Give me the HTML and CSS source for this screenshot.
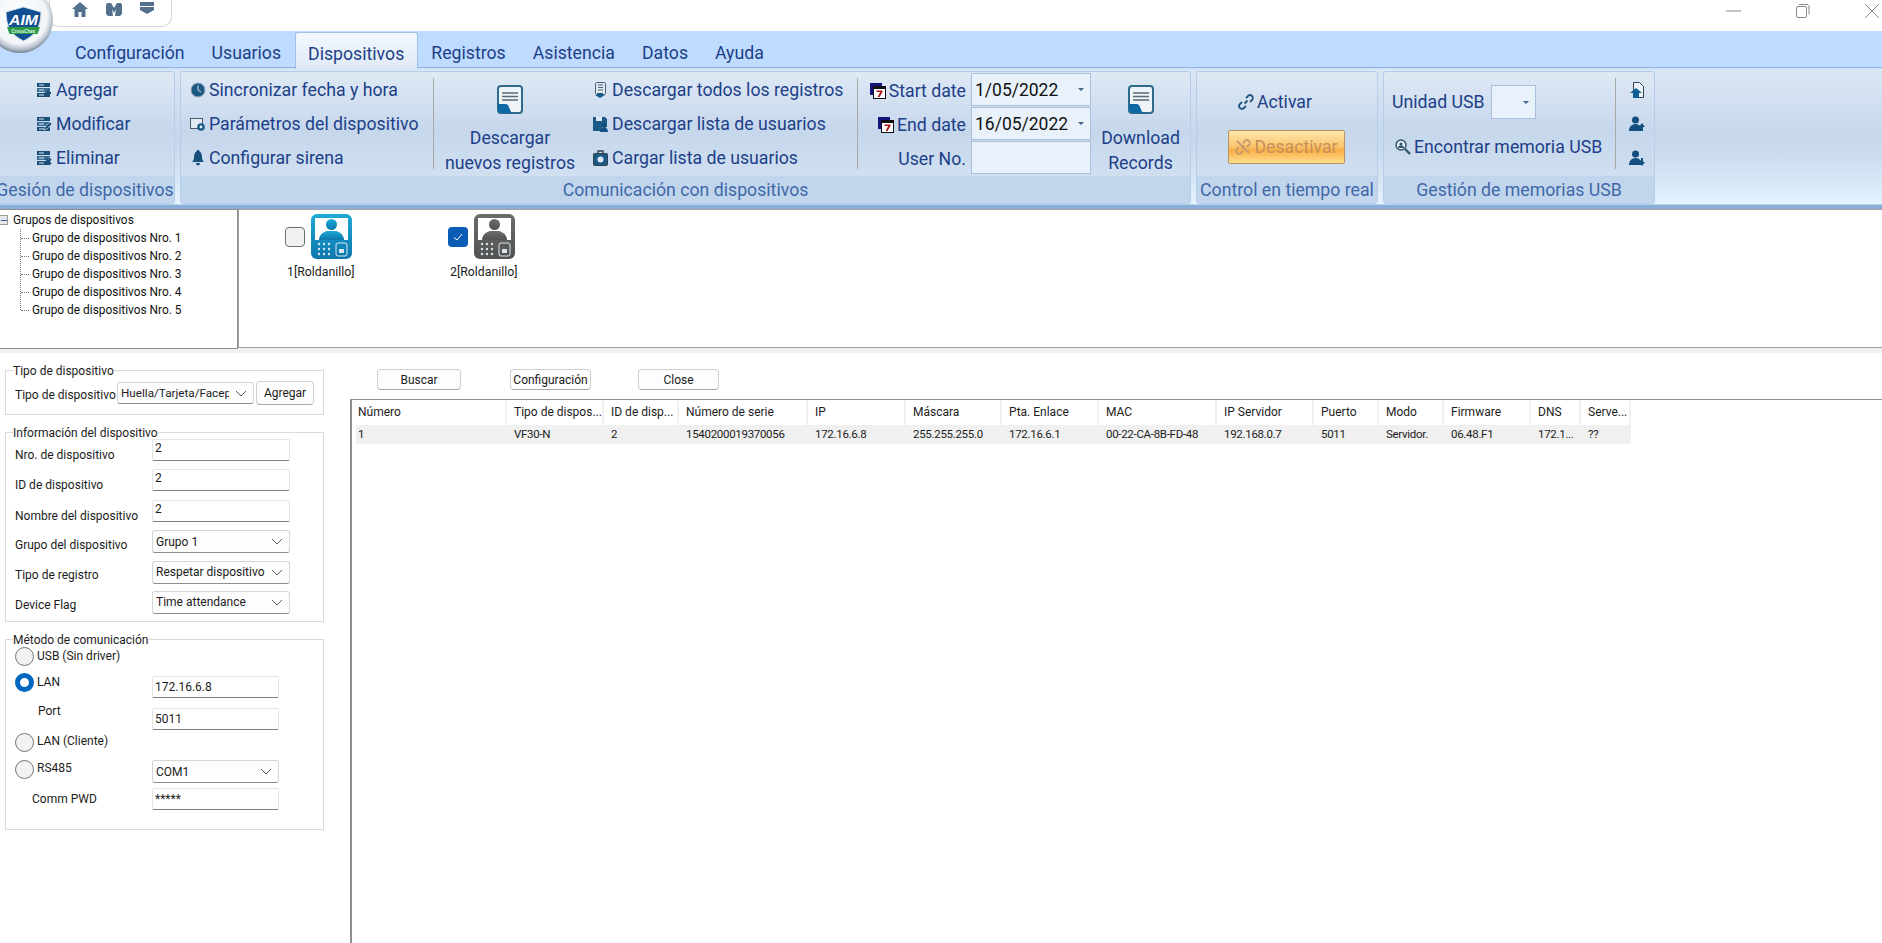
FILE: index.html
```html
<!DOCTYPE html>
<html lang="es">
<head>
    <meta charset="UTF-8">
    <title>CrossChex - Dispositivos</title>
    <link rel="stylesheet" href="styles.css">
</head>
<body>
    <svg class="sprites" width="0" height="0">
        <defs>
            <linearGradient id="blueBody" x1="0" y1="0" x2="0" y2="1">
                <stop offset="0" stop-color="#1eaad6"/>
                <stop offset="1" stop-color="#0c76ad"/>
            </linearGradient>
            <linearGradient id="grayBody" x1="0" y1="0" x2="0" y2="1">
                <stop offset="0" stop-color="#6c6c6c"/>
                <stop offset="1" stop-color="#525252"/>
            </linearGradient>
            <radialGradient id="silver" cx="0.5" cy="0.45" r="0.55">
                <stop offset="0" stop-color="#ffffff"/>
                <stop offset="0.75" stop-color="#f2f5f8"/>
                <stop offset="0.9" stop-color="#b5c0cb"/>
                <stop offset="1" stop-color="#75838f"/>
            </radialGradient>
            <symbol id="i-list" viewBox="0 0 16 16">
                <rect x="0" y="1" width="13" height="4" fill="#1c4f78"/>
                <rect x="0" y="6" width="13" height="4" fill="#3a6d92"/>
                <rect x="0" y="11" width="13" height="4" fill="#1c4f78"/>
                <path d="M2 3h5M2 8h5M2 13h5" stroke="#d9e6f2" stroke-width="1"/>
            </symbol>
            <symbol id="i-doc" viewBox="0 0 26 29">
                <rect x="1" y="1" width="24" height="27" rx="3" fill="#eef3f8" stroke="#2d6a8c" stroke-width="2"/>
                <path d="M5 8h16M5 11.5h16M5 15h16" stroke="#5a6a78" stroke-width="1.4"/>
                <path d="M1 19h8c1 0 2 1 2.5 2l3 7H5c-2 0-4-2-4-4z" fill="#0d68a4"/>
            </symbol>
            <symbol id="i-cal" viewBox="0 0 16 16">
                <rect x="0" y="0" width="12" height="12" fill="#13137a"/>
                <rect x="3" y="3" width="13" height="13" fill="#111"/>
                <rect x="4" y="6" width="11" height="9" fill="#fff"/>
                <path d="M6.5 7.5h6v1.5l-3 5H7.600l2.600-5H6.500z" fill="#b01818"/>
            </symbol>
            <symbol id="i-person" viewBox="0 0 16 16">
                <circle cx="6.500" cy="4" r="3.500" fill="#124f80"/>
                <path d="M0 15c0-4 2.500-7 6.500-7s6.500 3 6.500 7z" fill="#124f80"/>
            </symbol>
            <symbol id="i-device" viewBox="0 0 41 45">
                <rect x="0" y="0" width="41" height="45" rx="6"/>
                <rect x="4" y="4" width="33" height="22" fill="#fff"/>
                <circle cx="20.500" cy="10.500" r="5.500"/>
                <path d="M8 26c0-5 4-8 8-9h9c4 1 8 4 8 9z"/>
                <g fill="#d8e8f0">
                    <circle cx="8" cy="30" r="1.200"/><circle cx="13" cy="30" r="1.200"/><circle cx="18" cy="30" r="1.200"/>
                    <circle cx="8" cy="35" r="1.200"/><circle cx="13" cy="35" r="1.200"/><circle cx="18" cy="35" r="1.200"/>
                    <circle cx="8" cy="40" r="1.200"/><circle cx="13" cy="40" r="1.200"/><circle cx="18" cy="40" r="1.200"/>
                </g>
                <rect x="25" y="29" width="11" height="13" rx="2" fill="none" stroke="#d8e8f0" stroke-width="1"/>
                <rect x="28" y="35" width="5" height="4" fill="#d8e8f0"/>
            </symbol>
            <symbol id="i-chev" viewBox="0 0 12 7">
                <path d="M1 1l5 5 5-5" fill="none" stroke="#5c5c5c" stroke-width="1"/>
            </symbol>
        </defs>
    </svg>

    <div class="logo">
        <svg width="70" height="70" viewBox="0 0 70 70">
            <circle cx="32" cy="32" r="33" fill="url(#silver)"/>
            <path d="M18 24l17.500-5L53 24c0 14-5 23-17.500 29C23 47 18 38 18 24z" fill="#114f92" stroke="#cfe0ee" stroke-width="1"/>
            <path d="M19 39h33l-2.500 7h-28z" fill="#2a9a45"/>
            <text x="35.500" y="37" class="logo-mark" textLength="29" lengthAdjust="spacingAndGlyphs">AIM</text>
            <text x="35.500" y="44.500" class="logo-sub">CrossChex</text>
        </svg>
    </div>

    <div class="titlebar">
        <div class="quick">
            <svg width="16" height="15" viewBox="0 0 16 15"><path d="M8 0L0 7h2.500v8h4v-5h3v5h4V7H16z" fill="#53708c"/></svg>
            <svg width="16" height="14" viewBox="0 0 16 14"><path d="M1 1h4l3 5 3-5h4l1 2v9l-2 2H9l1-7-2 4-2-4 1 7H2l-2-2V3z" fill="#53708c"/></svg>
            <svg width="14" height="12" viewBox="0 0 14 12"><path d="M0 0h14v4H0zM0 5h14v3l-7 4-7-4z" fill="#53708c"/></svg>
        </div>
        <div class="win-btns">
            <svg width="16" height="16" viewBox="0 0 16 16"><path d="M0 8h15" stroke="#8a8a8a"/></svg>
            <svg width="16" height="16" viewBox="0 0 16 16"><rect x="1.500" y="3.500" width="10" height="11" rx="1.500" fill="none" stroke="#8a8a8a"/><path d="M4 1.500h8c1 0 2 1 2 2v8" fill="none" stroke="#8a8a8a"/></svg>
            <svg width="16" height="16" viewBox="0 0 16 16"><path d="M1 1l14 14M15 1L1 15" stroke="#8a8a8a"/></svg>
        </div>
    </div>

    <div class="ribbon">
        <div class="tabs">
            <div class="tab">Configuración</div>
            <div class="tab">Usuarios</div>
            <div class="tab active">Dispositivos</div>
            <div class="tab">Registros</div>
            <div class="tab">Asistencia</div>
            <div class="tab">Datos</div>
            <div class="tab">Ayuda</div>
        </div>
        <div class="groups">
            <div class="group g-devices">
                <div class="group-body">
                    <div class="col col-devices">
                        <div class="cmd"><svg class="ico"><use href="#i-list"/><path d="M11 8v6M8 11h6" stroke="#1c4f78" stroke-width="2"/></svg>Agregar</div>
                        <div class="cmd"><svg class="ico"><use href="#i-list"/><path d="M7 14l1-3 5-5 2 2-5 5z" fill="#1c4f78" stroke="#e4edf6" stroke-width=".6"/></svg>Modificar</div>
                        <div class="cmd"><svg class="ico"><use href="#i-list"/><path d="M9 9l5 5M14 9l-5 5" stroke="#1c4f78" stroke-width="1.800"/></svg>Eliminar</div>
                    </div>
                </div>
                <div class="group-title">Gesión de dispositivos</div>
            </div>

            <div class="group g-comm">
                <div class="group-body">
                    <div class="col col-sync">
                        <div class="cmd"><svg class="ico" viewBox="0 0 16 16"><circle cx="8" cy="8" r="7" fill="#1c5a86" stroke="#9aa8b4"/><path d="M8 3.500V8l3 2" fill="none" stroke="#dfe9f3"/></svg>Sincronizar fecha y hora</div>
                        <div class="cmd"><svg class="ico" viewBox="0 0 16 16"><rect x="0.500" y="2.500" width="12" height="10" fill="#e3ebf4" stroke="#4c5a66"/><circle cx="11" cy="11" r="3.800" fill="#1c5a86"/><circle cx="11" cy="11" r="1.400" fill="#e3ebf4"/></svg>Parámetros del dispositivo</div>
                        <div class="cmd"><svg class="ico" viewBox="0 0 16 16"><path d="M8 0c1 0 1.500.7 1.500 1.500C11.500 2.500 12 5 12 7c0 3 1 4 2 5H2c1-1 2-2 2-5 0-2 .5-4.500 2.500-5.500C6.500.7 7 0 8 0zM6 13h4c0 1.500-1 2.500-2 2.500S6 14.500 6 13z" fill="#154f7c"/></svg>Configurar sirena</div>
                    </div>
                    <div class="sep"></div>
                    <div class="big big-new">
                        <svg class="big-ico"><use href="#i-doc"/></svg>
                        <span>Descargar</span>
                        <span>nuevos registros</span>
                    </div>
                    <div class="col col-down">
                        <div class="cmd"><svg class="ico" viewBox="0 0 16 16"><rect x="2.500" y="0.500" width="10" height="12" rx="1" fill="#dfe8f1" stroke="#4e6374"/><path d="M5 3h5M5 5.500h5M5 8h5" stroke="#4e6374"/><path d="M4 11h6v2h2l-5 3-5-3h2z" fill="#1c5a86"/></svg>Descargar todos los registros</div>
                        <div class="cmd"><svg class="ico" viewBox="0 0 16 16"><path d="M0 1h12l2 2v8H9l-1 4H0z" fill="#1c5a86"/><rect x="3" y="1" width="6" height="4" fill="#dfe8f1"/><circle cx="11" cy="9" r="2.500" fill="#124f80"/><path d="M7 16c0-3 2-5 4-5s4 2 4 5z" fill="#124f80"/></svg>Descargar lista de usuarios</div>
                        <div class="cmd"><svg class="ico" viewBox="0 0 16 16"><rect x="0.500" y="3.500" width="14" height="12" rx="1" fill="#1c5a86" stroke="#33424e"/><path d="M5 3.500V1h5v2.500" fill="none" stroke="#33424e" stroke-width="1.400"/><circle cx="7.500" cy="9.500" r="3" fill="#dfe8f1"/></svg>Cargar lista de usuarios</div>
                    </div>
                    <div class="sep"></div>
                    <div class="dates">
                        <div class="date-label"><svg class="ico"><use href="#i-cal"/></svg>Start date</div>
                        <div class="date-field"><span>1/05/2022</span><i class="caret"></i></div>
                        <div class="date-label"><svg class="ico"><use href="#i-cal"/></svg>End date</div>
                        <div class="date-field"><span>16/05/2022</span><i class="caret"></i></div>
                        <div class="date-label">User No.</div>
                        <div class="date-field"></div>
                    </div>
                    <div class="big big-records">
                        <svg class="big-ico"><use href="#i-doc"/></svg>
                        <span>Download</span>
                        <span>Records</span>
                    </div>
                </div>
                <div class="group-title">Comunicación con dispositivos</div>
            </div>

            <div class="group g-realtime">
                <div class="group-body realtime-body">
                    <div class="cmd cmd-activar"><svg class="ico" viewBox="0 0 16 16"><path d="M6.500 9.500l3-3M4 8L2 10c-1.500 1.500-1 3 0 4s2.500 1.500 4 0l2-2M8 4l2-2c1.500-1.500 3-1 4 0s1.500 2.500 0 4l-2 2" fill="none" stroke="#24577f" stroke-width="1.800"/></svg>Activar</div>
                    <div class="btn-orange"><svg class="ico" viewBox="0 0 16 16"><path d="M6.500 9.500l3-3M4 8L2 10c-1.500 1.500-1 3 0 4s2.500 1.500 4 0l2-2M8 4l2-2c1.500-1.500 3-1 4 0s1.500 2.500 0 4l-2 2M2 2l12 12" fill="none" stroke="#c99a6c" stroke-width="1.800"/></svg>Desactivar</div>
                </div>
                <div class="group-title">Control en tiempo real</div>
            </div>

            <div class="group g-usb">
                <div class="group-body">
                    <div class="usb-main">
                        <div class="usb-row"><span>Unidad USB</span><div class="usb-field"><i class="caret"></i></div></div>
                        <div class="cmd cmd-find"><svg class="ico" viewBox="0 0 16 16"><circle cx="6" cy="6" r="5" fill="#e8eff6" stroke="#33566f" stroke-width="1.500"/><circle cx="6" cy="5" r="1.600" fill="#33566f"/><path d="M3 9c0-2 1.500-2.500 3-2.500S9 7 9 9z" fill="#33566f"/><path d="M10 10l5 5" stroke="#33566f" stroke-width="2.400"/></svg>Encontrar memoria USB</div>
                    </div>
                    <div class="sep"></div>
                    <div class="col col-mini">
                        <div class="cmd"><svg class="ico" viewBox="0 0 16 16"><path d="M4.500.500h6l4 4v11h-10z" fill="#eef3f8" stroke="#33424e"/><path d="M7 6l6 5h-3v5H4v-5H1z" fill="#0d5f93"/></svg></div>
                        <div class="cmd"><svg class="ico"><use href="#i-person"/><path d="M13 7l3 4h-2v4h-2v-4h-2z" fill="#124f80"/></svg></div>
                        <div class="cmd"><svg class="ico"><use href="#i-person"/><path d="M13 16l3-4h-2V8h-2v4h-2z" fill="#124f80"/></svg></div>
                    </div>
                </div>
                <div class="group-title">Gestión de memorias USB</div>
            </div>
        </div>
    </div>

    <div class="panes">
        <div class="tree">
            <div class="tree-root"><i class="expander"></i>Grupos de dispositivos</div>
            <div class="tree-kids">
                <div class="tree-item">Grupo de dispositivos Nro. 1</div>
                <div class="tree-item">Grupo de dispositivos Nro. 2</div>
                <div class="tree-item">Grupo de dispositivos Nro. 3</div>
                <div class="tree-item">Grupo de dispositivos Nro. 4</div>
                <div class="tree-item">Grupo de dispositivos Nro. 5</div>
            </div>
        </div>
        <div class="device-pane">
            <div class="device">
                <div class="device-top">
                    <i class="check"></i>
                    <svg class="device-ico blue"><use href="#i-device"/></svg>
                </div>
                <div class="device-name">1[Roldanillo]</div>
            </div>
            <div class="device">
                <div class="device-top">
                    <i class="check on"><svg width="20" height="20" viewBox="0 0 20 20"><path d="M6 10.500l3 2.500 5-6" fill="none" stroke="#fff"/></svg></i>
                    <svg class="device-ico gray"><use href="#i-device"/></svg>
                </div>
                <div class="device-name">2[Roldanillo]</div>
            </div>
        </div>
    </div>

    <div class="main">
        <div class="side">
            <fieldset class="fs fs-type">
                <legend>Tipo de dispositivo</legend>
                <div class="type-row">
                    <span class="type-label">Tipo de dispositivo</span>
                    <div class="combo combo-type"><span class="clip">Huella/Tarjeta/Facep</span><svg class="chev"><use href="#i-chev"/></svg></div>
                    <div class="btn btn-add">Agregar</div>
                </div>
            </fieldset>

            <fieldset class="fs fs-info">
                <legend>Información del dispositivo</legend>
                <div class="info-grid">
                    <span class="lbl">Nro. de dispositivo</span><div class="edit">2</div>
                    <span class="lbl">ID de dispositivo</span><div class="edit">2</div>
                    <span class="lbl">Nombre del dispositivo</span><div class="edit">2</div>
                    <span class="lbl lbl-sel">Grupo del dispositivo</span><div class="combo"><span>Grupo 1</span><svg class="chev"><use href="#i-chev"/></svg></div>
                    <span class="lbl lbl-sel">Tipo de registro</span><div class="combo"><span>Respetar dispositivo</span><svg class="chev"><use href="#i-chev"/></svg></div>
                    <span class="lbl lbl-sel">Device Flag</span><div class="combo"><span>Time attendance</span><svg class="chev"><use href="#i-chev"/></svg></div>
                </div>
            </fieldset>

            <fieldset class="fs fs-com">
                <legend>Método de comunicación</legend>
                <div class="com-grid">
                    <div class="radio-line r-usb"><i class="radio"></i><span>USB (Sin driver)</span></div><div></div>
                    <div class="radio-line r-lan"><i class="radio on"></i><span>LAN</span></div><div class="edit edit-com">172.16.6.8</div>
                    <div class="com-label port">Port</div><div class="edit edit-com">5011</div>
                    <div class="radio-line"><i class="radio"></i><span>LAN (Cliente)</span></div><div></div>
                    <div class="radio-line"><i class="radio"></i><span>RS485</span></div><div class="combo combo-com"><span>COM1</span><svg class="chev"><use href="#i-chev"/></svg></div>
                    <div class="com-label pwd">Comm PWD</div><div class="edit edit-com">*****</div>
                </div>
            </fieldset>
        </div>

        <div class="content">
            <div class="actions">
                <div class="btn btn-search">Buscar</div>
                <div class="btn btn-config">Configuración</div>
                <div class="btn btn-close">Close</div>
            </div>
            <div class="listview">
                <div class="lv-row lv-head">
                    <span>Número</span><span>Tipo de dispos...</span><span>ID de disp...</span><span>Número de serie</span><span>IP</span><span>Máscara</span><span>Pta. Enlace</span><span>MAC</span><span>IP Servidor</span><span>Puerto</span><span>Modo</span><span>Firmware</span><span>DNS</span><span>Serve...</span>
                </div>
                <div class="lv-row lv-item">
                    <span>1</span><span>VF30-N</span><span>2</span><span>1540200019370056</span><span>172.16.6.8</span><span>255.255.255.0</span><span>172.16.6.1</span><span>00-22-CA-8B-FD-48</span><span>192.168.0.7</span><span>5011</span><span>Servidor.</span><span>06.48.F1</span><span>172.1...</span><span>??</span>
                </div>
            </div>
        </div>
    </div>
</body>
</html>
```

FILE: styles.css
```css
* {
    box-sizing: border-box;
}
html, body {
    margin: 0;
    height: 100%;
    overflow: hidden;
}
body {
    display: flex;
    flex-direction: column;
    height: 943px;
    background-color: #fff;
    font-family: Roboto, "Liberation Sans", sans-serif;
    font-size: 12px;
    color: #1c1c1c;
}
i {
    display: block;
}
.sprites {
    position: absolute;
}

/* title bar */
.logo {
    position: absolute;
    left: -12px;
    top: -12px;
    z-index: 2;
}
.logo-mark {
    font-family: "Liberation Sans", sans-serif;
    font-size: 15px;
    font-weight: bold;
    font-style: italic;
    fill: #fff;
    text-anchor: middle;
}
.logo-sub {
    font-family: "Liberation Sans", sans-serif;
    font-size: 4.5px;
    font-weight: bold;
    fill: #e6f6ea;
    text-anchor: middle;
}
.titlebar {
    display: flex;
    justify-content: space-between;
    height: 31px;
    flex: none;
}
.quick {
    display: flex;
    align-items: flex-start;
    gap: 18px;
    width: 123px;
    height: 27px;
    margin-left: 49px;
    padding: 2px 0 0 22px;
    border: 1px solid #d3d3d3;
    border-top: none;
    border-radius: 0 0 10px 10px;
}
.win-btns {
    display: flex;
    gap: 53px;
    padding: 3px 2px 0 0;
}

/* ribbon */
.ribbon {
    flex: none;
    height: 178px;
    background: linear-gradient(#bfdbff 0, #bfdbff 37px, #dbe6f4 38px, #c6d7ec 60%, #d8e7f6 85%, #e3f2fd 97%, #8aaed9 98%, #8aaed9 100%);
    color: #1c3f87;
    font-size: 17.7px;
}
.tabs {
    display: flex;
    height: 37px;
    padding-left: 62px;
    border-bottom: 1px solid #8db2e3;
}
.tab {
    height: 37px;
    padding: 7px 13.5px 0;
    line-height: 30px;
}
.tab:first-child {
    padding-left: 13px;
}
.tab.active {
    height: 37px;
    margin-top: 1px;
    padding-top: 6px;
    background: linear-gradient(#f3f8fe, #dfe9f6);
    border: 1px solid #9fc0e8;
    border-bottom: none;
    border-radius: 3px 3px 0 0;
    padding-left: 12.5px;
    padding-right: 12.5px;
}
.groups {
    display: flex;
    gap: 5px;
    margin: 3px 0 0 -5px;
}
.group {
    display: flex;
    flex-direction: column;
    flex: none;
    height: 133px;
    border: 1px solid #b5cde8;
    border-radius: 3px;
    background: linear-gradient(#dfe9f5, #c6d7ec 45%, #d6e5f4);
}
.g-devices { width: 180px; }
.g-comm { width: 1011px; }
.g-realtime { width: 182px; }
.g-usb { width: 272px; }
.group-body {
    display: flex;
    flex: 1;
    min-height: 0;
}
.group-title {
    height: 27px;
    line-height: 28px;
    text-align: center;
    background-color: #c1d6ec;
    color: #3f68a8;
    white-space: nowrap;
}
.col {
    display: flex;
    flex-direction: column;
    padding-top: 1px;
}
.cmd {
    display: flex;
    align-items: center;
    height: 34px;
    white-space: nowrap;
}
.ico {
    width: 16px;
    height: 16px;
    flex: none;
    margin-right: 3px;
}
.col-devices { padding-left: 41px; }
.col-sync { width: 253px; padding-left: 9px; }
.col-down { width: 272px; padding-left: 7px; }
.col-mini { padding-left: 13px; }
.sep {
    flex: none;
    width: 1px;
    height: 91px;
    margin-top: 6px;
    background-color: #a9a9a9;
}
.big {
    display: flex;
    flex-direction: column;
    align-items: center;
    flex: none;
    padding-top: 13px;
    line-height: 25px;
    white-space: nowrap;
}
.big-new { width: 152px; }
.big-records { width: 99px; }
.big-ico {
    width: 26px;
    height: 29px;
    margin-bottom: 12px;
}
.dates {
    display: grid;
    grid-template-columns: 108px 120px;
    grid-auto-rows: 33px;
    gap: 1px 5px;
    flex: none;
    width: 233px;
    padding-top: 1px;
}
.date-label {
    display: flex;
    align-items: center;
    justify-content: flex-end;
    padding-top: 2px;
    white-space: nowrap;
}
.date-field {
    display: flex;
    align-items: center;
    justify-content: space-between;
    padding: 0 5px 0 3px;
    background-color: #e9f1fb;
    border: 1px solid #a9bfdc;
    color: #111;
    font-size: 17.5px;
}
.caret {
    width: 0;
    height: 0;
    margin-right: 1px;
    border-top: 3px solid #46608a;
    border-left: 3px solid transparent;
    border-right: 3px solid transparent;
}
.realtime-body {
    flex-direction: column;
    padding-top: 15px;
}
.cmd-activar {
    height: 30px;
    padding-left: 41px;
}
.btn-orange {
    display: flex;
    align-items: center;
    justify-content: center;
    width: 117px;
    height: 34px;
    margin: 13px 0 0 31px;
    border: 1px solid #b9935c;
    border-radius: 2px;
    background: linear-gradient(#fde8ae, #fbc36a 50%, #f9ae45 60%, #fedf8e);
    color: #c8905a;
}
.usb-main {
    width: 231px;
    padding: 13px 0 0 8px;
}
.usb-row {
    display: flex;
    align-items: center;
    gap: 6px;
    height: 34px;
    white-space: nowrap;
}
.usb-field {
    display: flex;
    align-items: center;
    justify-content: flex-end;
    width: 45px;
    height: 34px;
    padding-right: 5px;
    background-color: #e9f1fb;
    border: 1px solid #a9bfdc;
}
.cmd-find {
    margin: 11px 0 0 3px;
}

/* tree and device icons */
.panes {
    display: flex;
    flex: none;
    height: 144px;
    background-color: #f0f0f0;
}
.tree {
    width: 238px;
    height: 140px;
    padding-top: 1px;
    background-color: #fff;
    border: 1px solid #8f8f8f;
    border-left: none;
    color: #111;
    font-size: 11.9px;
}
.tree-root {
    display: flex;
    align-items: center;
    height: 18px;
    padding-left: 13px;
    position: relative;
}
.expander {
    position: absolute;
    left: 0;
    top: 4px;
    width: 8px;
    height: 10px;
    background: linear-gradient(#3d5fa8, #3d5fa8) center / 6px 1px no-repeat, #e8e8e8;
    border: 1px solid #9a9a9a;
    border-left: none;
}
.tree-kids {
    margin-left: 20px;
    border-left: 1px dotted #777;
    height: 81px;
}
.tree-item {
    display: flex;
    align-items: center;
    height: 18px;
    padding-left: 11px;
    position: relative;
    white-space: nowrap;
}
.tree-item::before {
    content: "";
    position: absolute;
    left: 0;
    top: 9px;
    width: 8px;
    border-top: 1px dotted #777;
}
.device-pane {
    display: flex;
    flex: 1;
    height: 139px;
    padding: 4px 0 0 46px;
    background-color: #fff;
    border: 1px solid #a3a3a3;
    border-right: none;
}
.device {
    width: 163px;
}
.device-top {
    display: flex;
    align-items: center;
    gap: 6px;
    height: 45px;
}
.device-ico {
    width: 41px;
    height: 45px;
}
.device-ico.blue { fill: url(#blueBody); }
.device-ico.gray { fill: url(#grayBody); }
.check {
    width: 20px;
    height: 20px;
    background-color: #f1f1f1;
    border: 1px solid #6f6f6f;
    border-radius: 4px;
}
.check.on {
    background-color: #0b5cb5;
    border: none;
}
.device-name {
    margin-top: 6px;
    padding-left: 2px;
    font-size: 12.3px;
    line-height: 14px;
    white-space: nowrap;
}

/* lower area */
.main {
    display: flex;
    flex: 1;
    min-height: 0;
}
.side {
    flex: none;
    width: 350px;
    padding: 10px 0 0 5px;
}
.fs {
    width: 319px;
    margin: 0 0 10px;
    padding: 0;
    border: 1px solid #dadada;
}
.fs legend {
    position: relative;
    top: 1px;
    margin-left: 7px;
    padding: 0;
    line-height: 14px;
}
.fs-type {
    height: 52px;
}
.type-row {
    display: flex;
    align-items: flex-start;
    margin-top: 5px;
    padding-left: 9px;
}
.type-label {
    width: 102px;
    padding-top: 6px;
    white-space: nowrap;
}
.combo {
    display: flex;
    align-items: center;
    justify-content: space-between;
    height: 23px;
    padding: 0 6px 0 3px;
    background-color: #fdfdfd;
    border: 1px solid #d5d5d5;
    border-bottom-color: #8f8f8f;
    border-radius: 3px;
    white-space: nowrap;
}
.chev {
    width: 12px;
    height: 7px;
    flex: none;
}
.combo-type {
    width: 137px;
    height: 22px;
    margin-right: 2px;
    font-size: 11.7px;
}
.clip {
    width: 108px;
    overflow: hidden;
}
.btn {
    display: flex;
    align-items: center;
    justify-content: center;
    background-color: #fdfdfd;
    border: 1px solid #d0d0d0;
    border-bottom-color: #a8a8a8;
    border-radius: 4px;
    white-space: nowrap;
}
.btn-add {
    width: 58px;
    height: 24px;
    margin-top: -1px;
}
.fs-info {
    height: 197px;
}
.info-grid {
    display: grid;
    grid-template-columns: 137px 138px;
    grid-auto-rows: 30.4px;
    padding-left: 9px;
}
.lbl {
    padding-top: 9px;
    line-height: 14px;
    white-space: nowrap;
}
.lbl-sel {
    padding-top: 7.4px;
}
.edit {
    height: 22px;
    padding: 0 2px 3px;
    line-height: 16px;
    background-color: #fff;
    border: 1px solid #e4e4e4;
    border-bottom-color: #7f7f7f;
    border-radius: 2px;
}
.fs-com {
    height: 198px;
}
.com-grid {
    display: grid;
    grid-template-columns: 146px 127px;
    grid-template-rows: 30px 32px 25px 27px 28px 22px;
    align-items: start;
}
.radio-line {
    display: flex;
    align-items: flex-start;
    gap: 3px;
    padding-left: 9px;
    line-height: 14px;
}
.radio-line span {
    margin-top: 1px;
}
.radio {
    width: 19px;
    height: 19px;
    flex: none;
    background-color: #f2f2f2;
    border: 1px solid #757575;
    border-radius: 50%;
}
.radio.on {
    background-color: #fff;
    border: 5.5px solid #0067c0;
}
.r-usb .radio { margin-top: 1px; }
.r-usb span { margin-top: 3px; }
.r-lan .radio { margin-top: -3px; }
.r-lan span { margin-top: -1px; }
.com-label {
    line-height: 14px;
}
.port { padding: 0 0 0 32px; margin-top: -4px; }
.pwd { padding: 4px 0 0 26px; }
.edit-com {
    line-height: 20px;
}
.content {
    display: flex;
    flex-direction: column;
    flex: 1;
    min-width: 0;
}
.actions {
    display: flex;
    padding: 16px 0 9px 27px;
}
.actions .btn {
    height: 21px;
}
.btn-search { width: 84px; margin-right: 49px; }
.btn-config { width: 81px; margin-right: 47px; }
.btn-close { width: 81px; }
.listview {
    flex: 1;
    padding-left: 4px;
    border-top: 1px solid #8f8f8f;
    border-left: 2px solid #8f8f8f;
}
.lv-row {
    display: grid;
    grid-template-columns: 151px 97px 75px 129px 98px 96px 97px 118px 97px 65px 65px 87px 50px 50px;
    width: 1275px;
    white-space: nowrap;
}
.lv-row span {
    padding-left: 7px;
    overflow: hidden;
}
.lv-row span:first-child {
    padding-left: 2px;
}
.lv-head {
    height: 25px;
    line-height: 25px;
}
.lv-head span {
    border-right: 2px solid #f0f0f0;
}
.lv-item {
    height: 19px;
    line-height: 19px;
    background-color: #f0f0f0;
    font-size: 11.5px;
    letter-spacing: -0.3px;
}
```
